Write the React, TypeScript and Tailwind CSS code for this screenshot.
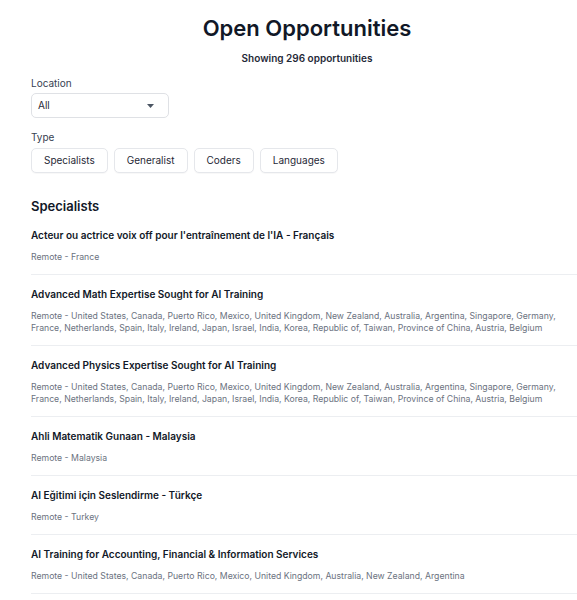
import React from "react";

const types = ["Specialists", "Generalist", "Coders", "Languages"];

const jobs = [
  {
    title: "Acteur ou actrice voix off pour l'entraînement de l'IA - Français",
    location: "Remote - France",
  },
  {
    title: "Advanced Math Expertise Sought for AI Training",
    location:
      "Remote - United States, Canada, Puerto Rico, Mexico, United Kingdom, New Zealand, Australia, Argentina, Singapore, Germany, France, Netherlands, Spain, Italy, Ireland, Japan, Israel, India, Korea, Republic of, Taiwan, Province of China, Austria, Belgium",
  },
  {
    title: "Advanced Physics Expertise Sought for AI Training",
    location:
      "Remote - United States, Canada, Puerto Rico, Mexico, United Kingdom, New Zealand, Australia, Argentina, Singapore, Germany, France, Netherlands, Spain, Italy, Ireland, Japan, Israel, India, Korea, Republic of, Taiwan, Province of China, Austria, Belgium",
  },
  { title: "Ahli Matematik Gunaan - Malaysia", location: "Remote - Malaysia" },
  { title: "AI Eğitimi için Seslendirme - Türkçe", location: "Remote - Turkey" },
  {
    title: "AI Training for Accounting, Financial & Information Services",
    location:
      "Remote - United States, Canada, Puerto Rico, Mexico, United Kingdom, Australia, New Zealand, Argentina",
  },
];

export default function App() {
  return (
    <div
      className="h-screen overflow-hidden bg-white pl-[31px] pt-[14px] text-[#111827]"
      style={{ fontFamily: "Inter, 'Noto Sans', sans-serif" }}
    >
      <div className="w-[552px]">
        <h1 className="text-center text-[22px] font-semibold leading-[28px]">Open Opportunities</h1>
        <p className="mt-[9px] text-center text-[10px] font-semibold leading-[14px] text-[#1f2937]">
          Showing 296 opportunities
        </p>

        <label className="mt-[11px] block text-[10px] leading-[14px] text-[#374151]">Location</label>
        <div className="mt-[3px] flex h-[25px] w-[138px] items-center justify-between rounded-[5px] border border-[#dfe1e5] pl-[6px] pr-[14px] text-[10px] text-[#1f2937]">
          <span>All</span>
          <svg width="7" height="4" viewBox="0 0 7 4">
            <path d="M0 0h7L3.5 4z" fill="#4b5563" />
          </svg>
        </div>

        <label className="mt-[12px] block text-[10px] leading-[14px] text-[#374151]">Type</label>
        <div className="mt-[4px] flex gap-[6px]">
          {types.map((t) => (
            <button
              key={t}
              className="h-[25px] rounded-[5px] border border-[#e5e7eb] bg-white px-[12px] text-[10px] text-[#1f2937] shadow-[0_1px_1px_rgba(0,0,0,0.03)]"
            >
              {t}
            </button>
          ))}
        </div>

        <h2 className="mt-[23px] text-[13px] font-semibold leading-[20px]">Specialists</h2>

        <ul>
          {jobs.map((j) => (
            <li key={j.title} className="border-b border-[#eceef1] pb-[11px] pt-[12px]">
              <p className="text-[10px] font-semibold leading-[14px] text-[#111827]">{j.title}</p>
              <p className="mt-[9px] pr-[20px] text-[8.7px] leading-[12px] text-[#6b7280]">{j.location}</p>
            </li>
          ))}
        </ul>
      </div>
    </div>
  );
}
